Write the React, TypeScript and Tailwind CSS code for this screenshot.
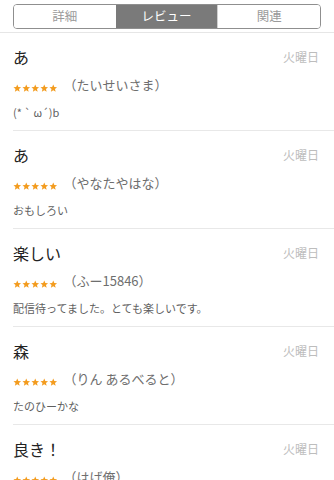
const reviews = [
  { title: "あ", name: "（たいせいさま）", body: "(* ` ω´)b", date: "火曜日" },
  { title: "あ", name: "（やなたやはな）", body: "おもしろい", date: "火曜日" },
  { title: "楽しい", name: "（ふー15846）", body: "配信待ってました。とても楽しいです。", date: "火曜日" },
  { title: "森", name: "（りん あるべると）", body: "たのひーかな", date: "火曜日" },
  { title: "良き！", name: "（はげ俺）", body: "最高です", date: "火曜日" },
];

function Stars() {
  return (
    <div className="flex gap-[0.5px]">
      {[0, 1, 2, 3, 4].map((i) => (
        <svg key={i} viewBox="0 0 24 24" className="h-[8.5px] w-[8.5px]" fill="#f39c1f">
          <path d="M12 1.5l3.1 7.1 7.6.7-5.8 5.1 1.8 7.5L12 17.9 5.3 21.9l1.8-7.5L1.3 9.3l7.6-.7z" />
        </svg>
      ))}
    </div>
  );
}

export default function App() {
  const tabs = ["詳細", "レビュー", "関連"];
  return (
    <div
      className="h-[480px] w-[334px] overflow-hidden bg-white"
      style={{ fontFamily: '"Noto Sans CJK JP", "Noto Sans", sans-serif' }}
    >
      <div className="border-b border-[#e6e6e6] px-[13px] pb-[3px] pt-[4px]">
        <div className="flex h-[25px] overflow-hidden rounded-[4px] border border-[#8f8f8f]">
          {tabs.map((t, i) => (
            <div
              key={t}
              className={
                "flex flex-1 items-center justify-center text-[12.5px] " +
                (i === 1 ? "bg-[#7a7a7a] text-white" : "bg-white text-[#9a9a9a]") +
                (i === 2 ? " border-l border-[#d0d0d0]" : "")
              }
            >
              {t}
            </div>
          ))}
        </div>
      </div>
      <div className="pl-[13px]">
        {reviews.map((r, i) => (
          <div key={i} className="border-b border-[#e8e8e8] pb-[10px] pr-[15px] pt-[13px]">
            <div className="flex items-center justify-between">
              <span className="text-[16px] leading-[22px] text-[#222]">{r.title}</span>
              <span className="text-[12px] leading-[22px] text-[#bdbdbd]">{r.date}</span>
            </div>
            <div className="mt-[8px] flex h-[18px] items-center gap-[6px]">
              <div className="mt-[6px]">
                <Stars />
              </div>
              <span className="text-[13px] leading-[18px] text-[#6e6e6e]">{r.name}</span>
            </div>
            <div className="mt-[10px] text-[11px] leading-[16px] text-[#5f5f5f]">{r.body}</div>
          </div>
        ))}
      </div>
    </div>
  );
}
